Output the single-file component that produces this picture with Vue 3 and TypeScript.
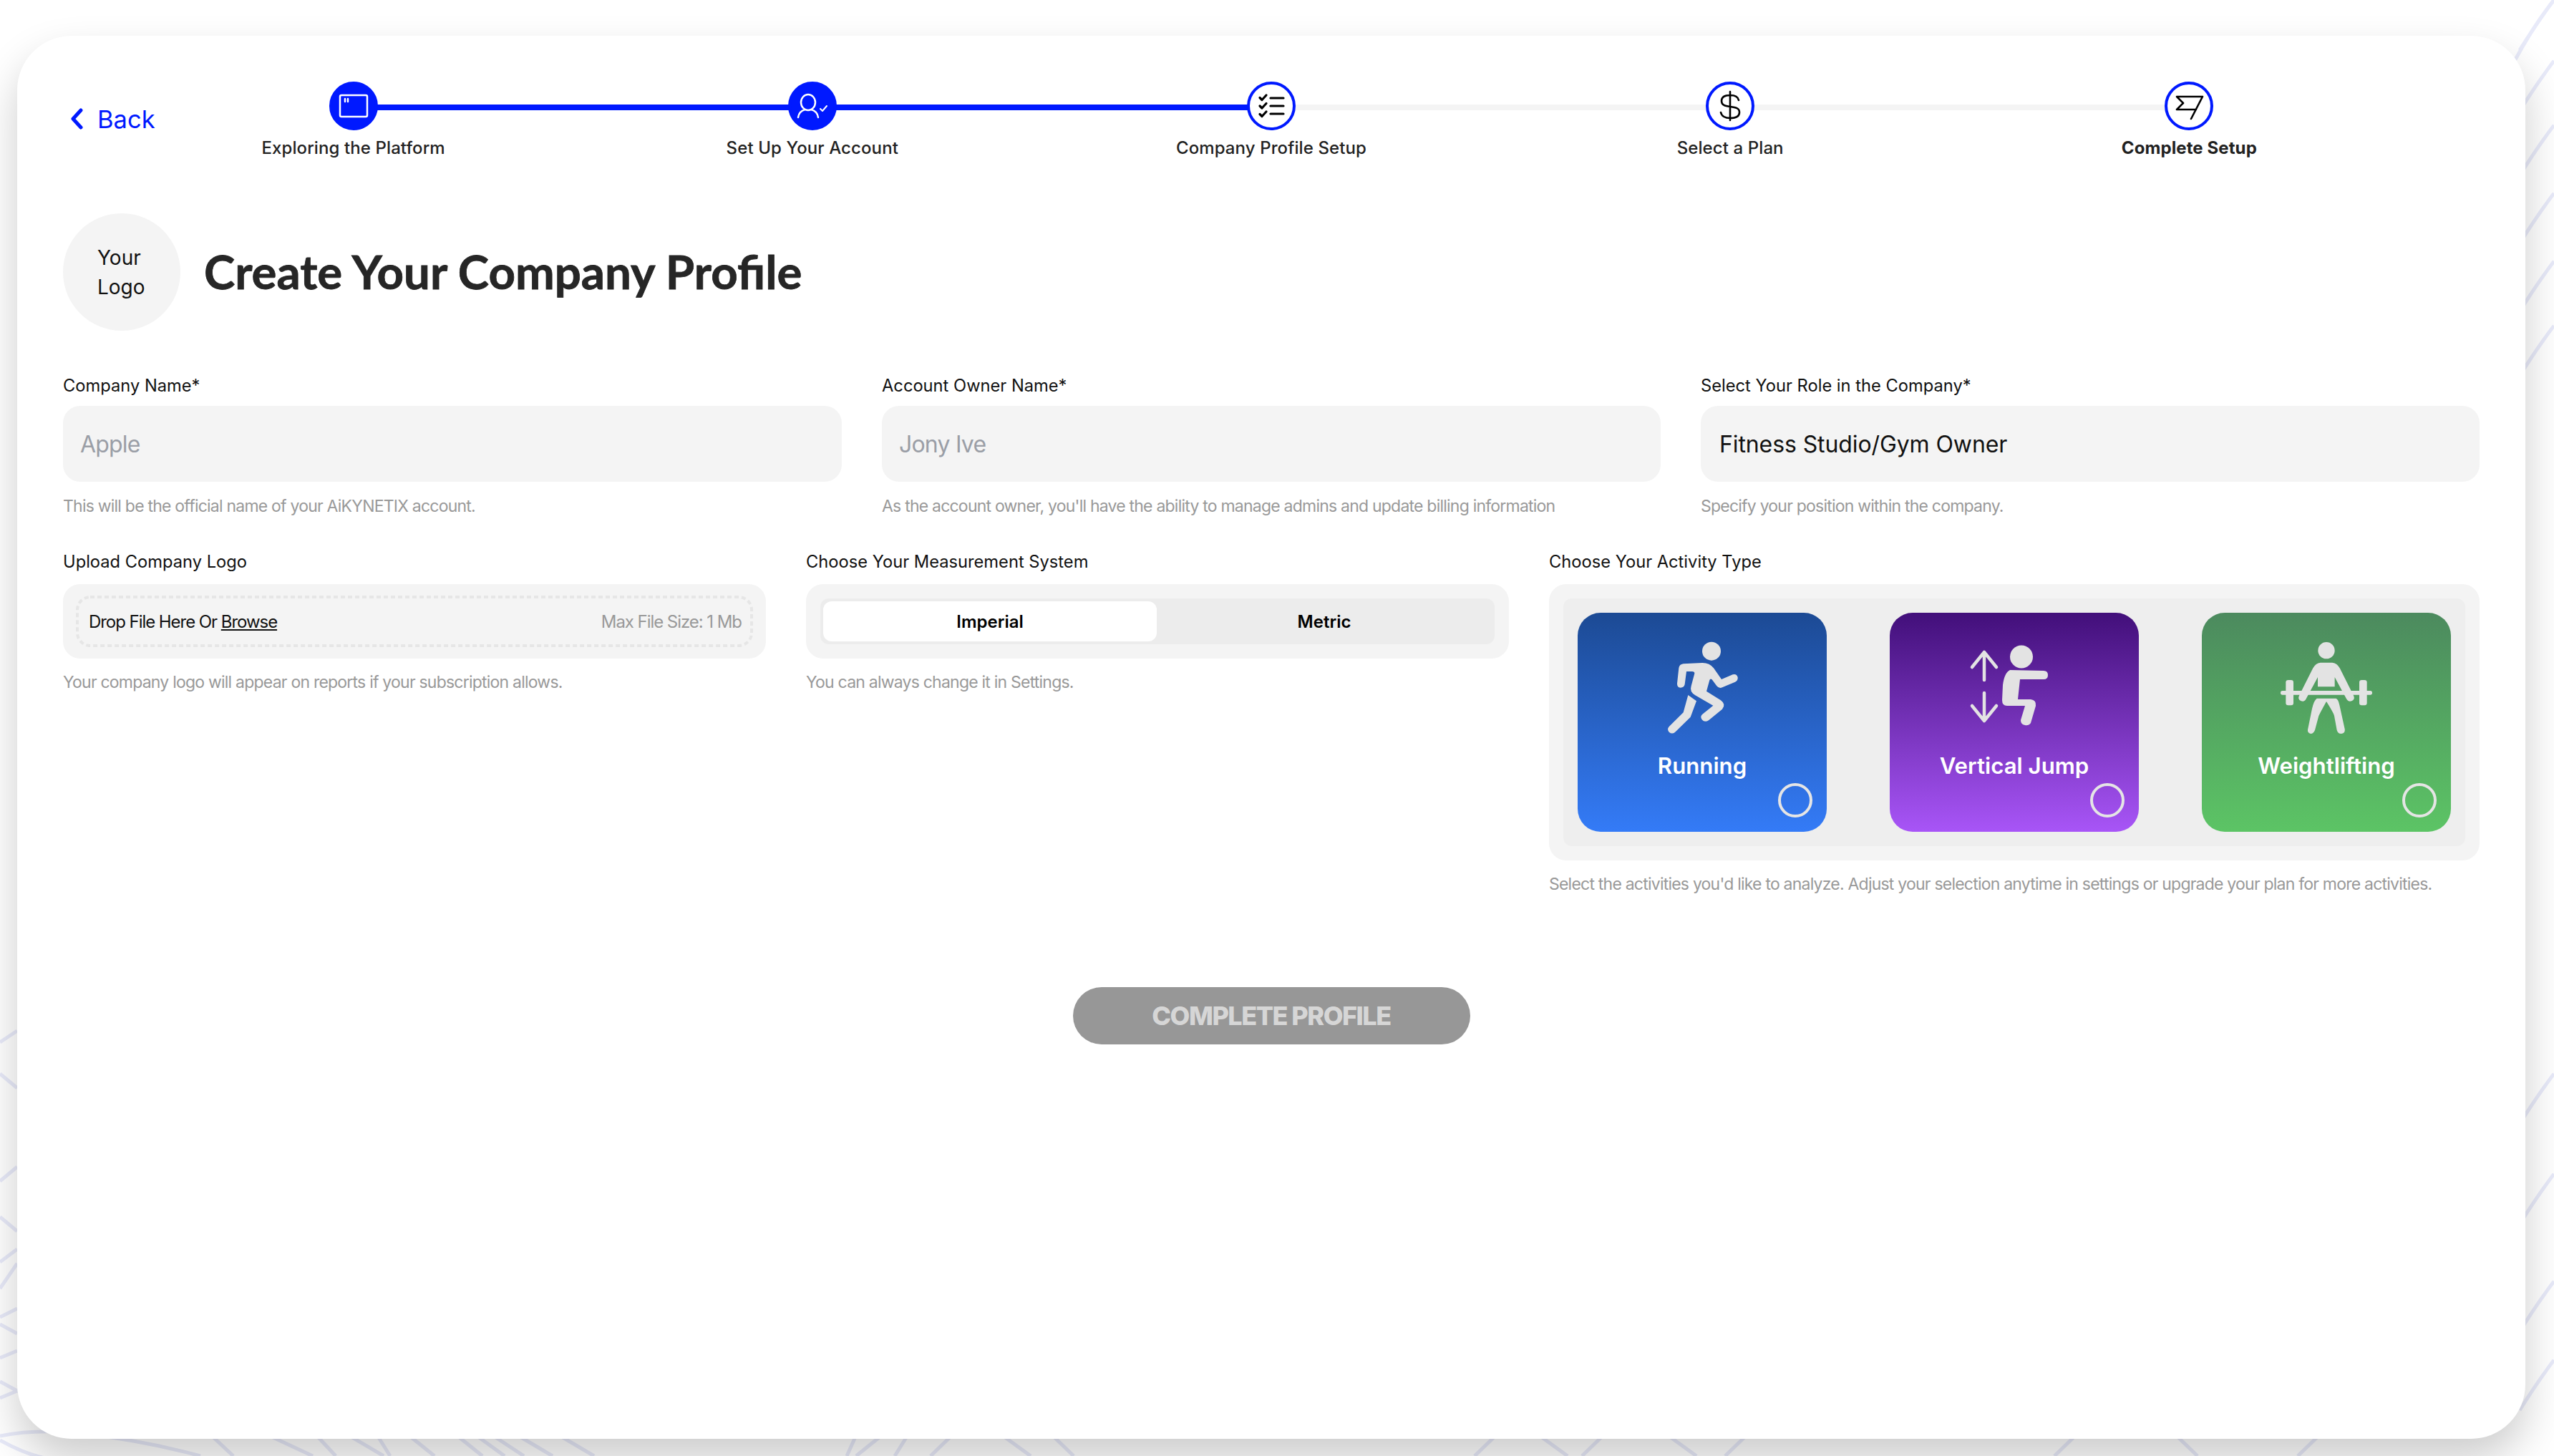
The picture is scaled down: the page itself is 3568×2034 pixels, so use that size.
<template>
  <div class="page">
    <svg class="bg-lines" width="3568" height="2034" viewBox="0 0 3568 2034">
      <path v-for="(d, i) in bgLines" :key="i" :d="d" />
    </svg>

    <main class="card">
      <header class="top">
        <a class="back">
          <svg width="20" height="30" viewBox="0 0 20 30"><path d="M16 3 L5 15 L16 27" /></svg>
          <span>Back</span>
        </a>
        <ol class="stepper">
          <li v-for="(s, i) in steps" :key="s.label" class="step" :class="{ done: s.done, 'line-done': s.lineDone, last: i === steps.length - 1 }">
            <div class="dot">
              <svg v-if="s.icon === 'window'" width="60" height="60" viewBox="0 0 60 60" class="ic-white">
                <rect x="11" y="15" width="38" height="30" rx="2" />
                <path d="M18 20v4M22 20v4" />
              </svg>
              <svg v-else-if="s.icon === 'user'" width="60" height="60" viewBox="0 0 60 60" class="ic-white">
                <ellipse cx="24" cy="25" rx="10" ry="11" />
                <path d="M10 46c1-7 6-10 10-11M38 46c-1-7-6-10-10-11" />
                <path class="thin" d="M41 34l3 3 6-7" />
              </svg>
              <svg v-else-if="s.icon === 'list'" width="60" height="60" viewBox="0 0 60 60" class="ic-black">
                <path d="M14 18.5l3 3 6-6.5M14 30l3 3 6-6.5M14 41.5l3 3 6-6.5" />
                <path d="M29 19h18M29 30h18M29 41h18" />
              </svg>
              <svg v-else-if="s.icon === 'dollar'" width="60" height="60" viewBox="0 0 60 60" class="ic-thin">
                <path d="M30 10v40M42 22c-1-5-5-7-12-7-8 0-12 3-12 8 0 6 5 7 12 8 8 1 13 2 13 8s-5 8-13 8c-7 0-12-3-13-8" />
              </svg>
              <svg v-else width="60" height="60" viewBox="0 0 60 60" class="ic-thin">
                <path d="M33 48L49 17H13L22 26L13 35H40" />
              </svg>
            </div>
            <div class="step-label" :class="{ strong: i === steps.length - 1 }">{{ s.label }}</div>
          </li>
        </ol>
      </header>

      <section class="title-row">
        <div class="logo-ph">Your<br />Logo</div>
        <h1>Create Your Company Profile</h1>
      </section>

      <section class="row-one">
        <div class="field">
          <label>Company Name*</label>
          <div class="input placeholder">Apple</div>
          <p class="hint">This will be the official name of your AiKYNETIX account.</p>
        </div>
        <div class="field">
          <label>Account Owner Name*</label>
          <div class="input placeholder">Jony Ive</div>
          <p class="hint">As the account owner, you'll have the ability to manage admins and update billing information</p>
        </div>
        <div class="field">
          <label>Select Your Role in the Company*</label>
          <div class="input">Fitness Studio/Gym Owner</div>
          <p class="hint">Specify your position within the company.</p>
        </div>
      </section>

      <section class="row-two">
        <div class="field">
          <label>Upload Company Logo</label>
          <div class="box upload">
            <div class="drop">
              <svg class="dash" width="946" height="72" viewBox="0 0 946 72"><rect x="2" y="2" width="942" height="68" rx="18" /></svg>
              <span>Drop File Here Or <u>Browse</u></span>
              <span class="max">Max File Size: 1 Mb</span>
            </div>
          </div>
          <p class="hint">Your company logo will appear on reports if your subscription allows.</p>
        </div>
        <div class="field">
          <label>Choose Your Measurement System</label>
          <div class="box seg-wrap">
            <div class="seg">
              <button class="tab active">Imperial</button>
              <button class="tab">Metric</button>
            </div>
          </div>
          <p class="hint">You can always change it in Settings.</p>
        </div>
        <div class="field">
          <label>Choose Your Activity Type</label>
          <div class="box act-wrap">
            <div class="acts">
              <div v-for="a in activities" :key="a.name" class="act" :class="a.cls">
                <svg v-if="a.cls === 'run'" class="act-ic" width="180" height="150" viewBox="324 105 540 450">
                  <circle cx="633" cy="179" r="39" />
                  <path d="M515 232 L595 228 Q625 228 642 250 L675 297 L722 277 Q738 272 743 288 Q745 302 732 308 L678 331 Q665 337 655 325 L635 298 Q628 292 625 300 L612 347 L672 385 Q695 402 678 422 L622 468 Q605 480 593 466 Q583 452 597 442 L640 407 L565 364 Q540 350 548 325 L562 272 Q562 264 552 264 L528 264 L521 318 Q518 332 503 332 Q488 330 489 314 L496 250 Q498 234 515 232 Z" />
                  <path d="M535 363 L570 388 L545 455 L483 516 Q470 530 455 518 Q445 505 456 494 L515 436 Z" />
                </svg>
                <svg v-else-if="a.cls === 'jump'" class="act-ic" width="180" height="150" viewBox="84 29 180 150">
                  <ellipse cx="184" cy="61.5" rx="16" ry="16" />
                  <path d="M168 80 L215 81 Q221 81 221 87 Q221 93 215 93 L182 93 L179 121 L197 121 Q205 122 204 130 L197 154 Q194 158 189 157 Q183 156 183 150 L189 130 L164 130 Q157 130 157 122 L158 101 Q160 84 168 80 Z" />
                  <path class="arrow" d="M132 94V55M115 76L132 55L149 76M132 112V151M115 130L132 151L149 130" />
                </svg>
                <svg v-else class="act-ic" width="180" height="150" viewBox="0 0 540 450">
                  <circle cx="270" cy="71" r="35" />
                  <path d="M245 122 H295 Q315 124 326 145 L384 260 Q392 276 376 283 Q360 288 352 270 L305 183 V223 H234 V183 L187 270 Q180 288 164 283 Q148 276 156 260 L214 145 Q225 124 245 122 Z" />
                  <rect x="78" y="240" width="384" height="17" rx="8" />
                  <rect x="100" y="195" width="32" height="106" rx="10" />
                  <rect x="408" y="195" width="32" height="106" rx="10" />
                  <path d="M230 272 H310 Q320 275 325 300 L347 400 Q350 418 332 420 Q318 420 314 405 L303 345 Q300 332 270 285 Q245 330 238 345 L222 405 Q216 420 204 420 Q188 416 193 398 L210 315 Q218 280 230 272 Z" />
                </svg>
                <div class="act-name">{{ a.name }}</div>
                <span class="radio"></span>
              </div>
            </div>
          </div>
          <p class="hint">Select the activities you'd like to analyze. Adjust your selection anytime in settings or upgrade your plan for more activities.</p>
        </div>
      </section>

      <div class="actions">
        <button class="complete" disabled>COMPLETE PROFILE</button>
      </div>
    </main>
  </div>
</template>

<script setup lang="ts">
interface Step {
  label: string
  icon: string
  done?: boolean
  lineDone?: boolean
}

const steps: Step[] = [
  { label: 'Exploring the Platform', icon: 'window', done: true, lineDone: true },
  { label: 'Set Up Your Account', icon: 'user', done: true, lineDone: true },
  { label: 'Company Profile Setup', icon: 'list' },
  { label: 'Select a Plan', icon: 'dollar' },
  { label: 'Complete Setup', icon: 'flag' },
]

const activities = [
  { name: 'Running', cls: 'run' },
  { name: 'Vertical Jump', cls: 'jump' },
  { name: 'Weightlifting', cls: 'lift' },
]

// faint pattern that shows round the card
const rightEdge = [0, 85, 175, 270, 365, 455, 1500, 1640, 1790, 1900]
const bottomEdge = [
  [295, 326], [375, 437], [442, 469], [487, 536], [527, 545], [571, 607], [638, 674], [665, 705], [688, 732],
  [723, 772], [781, 830], [1196, 1183], [1232, 1196], [1268, 1250], [1330, 1300], [1400, 1440], [1470, 1500],
  [2090, 2060], [2150, 2190], [2240, 2210], [2330, 2370], [2440, 2410], [2900, 2870], [3040, 3070], [3240, 3210],
]
const leftEdge = [
  [1763, 1745], [1800, 1765], [1840, 1828], [1850, 1863], [1897, 1887], [1930, 1943], [1953, 1943],
  [1456, 1440], [1500, 1520], [1650, 1630], [1700, 1720],
]
const bgLines: string[] = [
  'M3513 85 Q3540 35 3568 0',
  ...rightEdge.map((y) => `M3520 ${y + 70} Q3545 ${y + 30} 3568 ${y}`),
  ...bottomEdge.map(([a, b]) => `M${a} 2005 L${b} 2034`),
  ...leftEdge.map(([a, b]) => `M0 ${a} L24 ${b}`),
  'M0 2006 Q50 1996 110 2002 Q200 2012 280 2034',
  'M0 2012 Q50 2040 90 2040',
]
</script>

<style scoped>
.page { position: relative; width: 3568px; height: 2034px; overflow: hidden; background: #fff; padding: 50px 40px 24px 24px; box-sizing: border-box; font-family: Inter, "Liberation Sans", sans-serif; color: #222; }
.bg-lines { position: absolute; left: 0; top: 0; }
.bg-lines path { fill: none; stroke: #e8eaf9; stroke-width: 5; }
.card { position: relative; height: 1960px; box-sizing: border-box; padding: 64px 64px 0; background: #fff; border-radius: 76px; box-shadow: 0 30px 60px rgba(0, 0, 0, 0.2); }

.top { display: flex; }
.back { width: 85px; flex: none; display: flex; align-items: center; gap: 19px; height: 40px; margin-top: 32px; padding-left: 9px; box-sizing: border-box; color: #0019ff; font-size: 34.5px; white-space: nowrap; }
.back svg { flex: none; }
.back path { fill: none; stroke: #0019ff; stroke-width: 5; stroke-linecap: round; stroke-linejoin: round; }
.stepper { list-style: none; margin: 0; padding: 0; flex: 1; display: grid; grid-template-columns: repeat(5, 641.2px); }
.step { position: relative; display: flex; flex-direction: column; align-items: center; }
.step::after { content: ''; position: absolute; left: 50%; width: 100%; top: 32px; height: 8px; background: #f4f4f4; }
.step.line-done::after { background: #0019ff; }
.step.last::after { display: none; }
.dot { position: relative; z-index: 1; width: 68px; height: 68px; box-sizing: border-box; border: 4px solid #0019ff; border-radius: 50%; background: #fff; display: flex; align-items: center; justify-content: center; }
.done .dot { background: #0019ff; }
.dot svg { fill: none; stroke-linecap: round; stroke-linejoin: round; }
.ic-white { stroke: #fff; stroke-width: 2.5; }
.ic-white .thin { stroke-width: 2; }
.ic-black { stroke: #000; stroke-width: 3.2; }
.ic-thin { stroke: #000; stroke-width: 2.6; }
.step-label { margin-top: 9px; font-size: 24px; line-height: 32px; font-weight: 500; letter-spacing: 0.1px; white-space: nowrap; }
.step-label.strong { font-weight: 700; }

.title-row { display: flex; align-items: center; gap: 33px; margin-top: 75px; }
.logo-ph { width: 164px; height: 164px; border-radius: 50%; background: #f4f4f4; box-sizing: border-box; padding: 42px 0 0 48px; font-size: 28px; line-height: 41px; color: #111; }
h1 { margin: -4px 0 0; font-family: Lato, sans-serif; font-size: 65.4px; font-weight: 700; -webkit-text-stroke: 0.8px #262626; color: #262626; }

.row-one { display: grid; grid-template-columns: repeat(3, 1fr); gap: 56px; margin-top: 62px; }
.row-two { display: grid; grid-template-columns: 982px 982px 1fr; gap: 56px; margin-top: 48px; }
.row-two .hint { margin-top: 18px; }
.field label { display: block; font-size: 23.7px; line-height: 30px; color: #111; }
.input { margin-top: 13px; height: 106px; border-radius: 24px; background: #f4f4f4; padding: 0 26px; display: flex; align-items: center; font-size: 32px; letter-spacing: -0.1px; color: #111; }
.input.placeholder { padding: 0 24px; letter-spacing: -0.8px; color: #9a9ea6; }
.hint { margin: 19px 0 0; font-size: 23px; line-height: 30px; letter-spacing: -0.78px; color: #999; white-space: nowrap; }

.box { margin-top: 16px; height: 104px; border-radius: 24px; background: #f4f4f4; box-sizing: border-box; }
.upload { padding: 16px 18px; }
.drop { position: relative; height: 72px; box-sizing: border-box; padding: 0 16px 0 18px; display: flex; align-items: center; justify-content: space-between; font-size: 24px; letter-spacing: -1.05px; color: #111; }
.dash { position: absolute; left: 0; top: 0; }
.dash rect { fill: none; stroke: #e6e6e6; stroke-width: 4; stroke-dasharray: 6 4; }
.max { color: #999; }
.seg-wrap { padding: 20px; }
.seg { height: 64px; border-radius: 12px; background: #ececec; padding: 4px; box-sizing: border-box; display: grid; grid-template-columns: 466px 1fr; }
.tab { border: 0; border-radius: 12px; background: transparent; font-family: inherit; font-size: 24px; font-weight: 600; color: #000; padding: 0; }
.tab.active { background: #fff; }

.act-wrap { height: 386px; padding: 20px; }
.acts { height: 346px; border-radius: 12px; background: #eee; padding: 20px; box-sizing: border-box; display: flex; justify-content: space-between; }
.act { position: relative; width: 348px; height: 306px; border-radius: 32px; padding-top: 29px; box-sizing: border-box; display: flex; flex-direction: column; align-items: center; }
.run { background: linear-gradient(#1c4a94, #347bf7); }
.jump { background: linear-gradient(#420f7a, #a855f7); }
.lift { background: linear-gradient(#4c8a5e, #5cc465); }
.act-ic { fill: #e3e3e3; display: block; }
.arrow { fill: none; stroke: #e3e3e3; stroke-width: 4.5; stroke-linecap: round; stroke-linejoin: round; }
.act-name { margin-top: 15px; font-size: 31.2px; line-height: 40px; font-weight: 600; color: #fff; }
.radio { position: absolute; right: 20px; bottom: 20px; width: 48px; height: 48px; box-sizing: border-box; border: 4px solid #e5e5e5; border-radius: 50%; }

.actions { display: flex; justify-content: center; margin-top: 129px; }
.complete { width: 555px; height: 80px; border: 0; border-radius: 40px; background: #979797; color: #d6d6d6; font-family: Inter, sans-serif; font-size: 36px; font-weight: 800; letter-spacing: -1.5px; padding: 0; }
</style>

<style>
body { margin: 0; background: #fff; }
</style>
